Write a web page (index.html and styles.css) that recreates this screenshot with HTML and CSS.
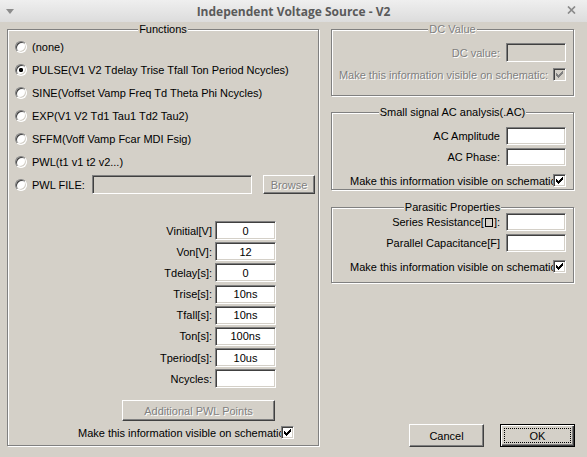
FILE: index.html
```html
<!DOCTYPE html>
<html>
<head>
<meta charset="utf-8">
<title>Independent Voltage Source - V2</title>
<link rel="stylesheet" href="styles.css">
</head>
<body>
<div class="titlebar">
  <svg class="menu-icon" width="8" height="5" viewBox="0 0 8 5"><path d="M0 0h8L4 5z" fill="#8c8c8c"/></svg>
  <div class="title">Independent Voltage Source - V2</div>
  <svg class="close-icon" width="9" height="8" viewBox="0 0 9 8"><path d="M1 0.5L8 7.5M8 0.5L1 7.5" stroke="#8a8a8a" stroke-width="1.7" fill="none"/></svg>
</div>
<div class="content">
  <div class="group functions">
    <div class="group-title">Functions</div>
    <div class="radios">
      <div class="radio-row"><span class="radio"></span><span>(none)</span></div>
      <div class="radio-row"><span class="radio checked"></span><span>PULSE(V1 V2 Tdelay Trise Tfall Ton Period Ncycles)</span></div>
      <div class="radio-row"><span class="radio"></span><span>SINE(Voffset Vamp Freq Td Theta Phi Ncycles)</span></div>
      <div class="radio-row"><span class="radio"></span><span>EXP(V1 V2 Td1 Tau1 Td2 Tau2)</span></div>
      <div class="radio-row"><span class="radio"></span><span>SFFM(Voff Vamp Fcar MDI Fsig)</span></div>
      <div class="radio-row"><span class="radio"></span><span>PWL(t1 v1 t2 v2...)</span></div>
      <div class="radio-row"><span class="radio"></span><span class="pwl-label">PWL FILE:</span><span class="field disabled pwl-file"></span><span class="btn disabled browse">Browse</span></div>
    </div>
    <div class="params">
      <span class="plabel">Vinitial[V]</span><span class="field">0</span>
      <span class="plabel">Von[V]:</span><span class="field">12</span>
      <span class="plabel">Tdelay[s]:</span><span class="field">0</span>
      <span class="plabel">Trise[s]:</span><span class="field">10ns</span>
      <span class="plabel">Tfall[s]:</span><span class="field">10ns</span>
      <span class="plabel">Ton[s]:</span><span class="field">100ns</span>
      <span class="plabel">Tperiod[s]:</span><span class="field">10us</span>
      <span class="plabel">Ncycles:</span><span class="field"></span>
    </div>
    <div class="btn disabled addpwl">Additional PWL Points</div>
    <div class="check-row left-check">
      <span>Make this information visible on schematic</span>
      <span class="check overlap"><svg width="7" height="7" viewBox="0 0 7 7" shape-rendering="crispEdges"><path d="M0 2h1v3h-1zM1 3h1v3h-1zM2 4h1v3h-1zM3 3h1v3h-1zM4 2h1v3h-1zM5 1h1v3h-1zM6 0h1v3h-1z" fill="#000"/></svg></span>
    </div>
  </div>

  <div class="right-col">
    <div class="group dc dim">
      <div class="group-title">DC Value</div>
      <div class="row dc-row1"><span>DC value:</span><span class="field disabled rfield"></span></div>
      <div class="check-row dc-row2">
        <span>Make this information visible on schematic:</span>
        <span class="check disabled gap"><svg width="7" height="7" viewBox="0 0 7 7" shape-rendering="crispEdges"><path d="M0 2h1v3h-1zM1 3h1v3h-1zM2 4h1v3h-1zM3 3h1v3h-1zM4 2h1v3h-1zM5 1h1v3h-1zM6 0h1v3h-1z" fill="#808080"/></svg></span>
      </div>
    </div>

    <div class="group ac">
      <div class="group-title">Small signal AC analysis(.AC)</div>
      <div class="row ac-row1"><span>AC Amplitude</span><span class="field rfield"></span></div>
      <div class="row ac-row2"><span>AC Phase:</span><span class="field rfield"></span></div>
      <div class="check-row ac-row3">
        <span>Make this information visible on schematic</span>
        <span class="check overlap"><svg width="7" height="7" viewBox="0 0 7 7" shape-rendering="crispEdges"><path d="M0 2h1v3h-1zM1 3h1v3h-1zM2 4h1v3h-1zM3 3h1v3h-1zM4 2h1v3h-1zM5 1h1v3h-1zM6 0h1v3h-1z" fill="#000"/></svg></span>
      </div>
    </div>

    <div class="group parasitic">
      <div class="group-title">Parasitic Properties</div>
      <div class="row par-row1"><span>Series Resistance[<span class="tofu"></span>]:</span><span class="field rfield"></span></div>
      <div class="row par-row2"><span>Parallel Capacitance[F]</span><span class="field rfield"></span></div>
      <div class="check-row par-row3">
        <span>Make this information visible on schematic</span>
        <span class="check overlap"><svg width="7" height="7" viewBox="0 0 7 7" shape-rendering="crispEdges"><path d="M0 2h1v3h-1zM1 3h1v3h-1zM2 4h1v3h-1zM3 3h1v3h-1zM4 2h1v3h-1zM5 1h1v3h-1zM6 0h1v3h-1z" fill="#000"/></svg></span>
      </div>
    </div>

    <div class="buttons">
      <div class="btn dlg">Cancel</div>
      <div class="btn dlg default"><span class="focus">OK</span></div>
    </div>
  </div>
</div>
</body>
</html>
```

FILE: styles.css
```css
* { box-sizing: border-box; }
html, body { margin: 0; padding: 0; }
body {
  width: 587px;
  height: 457px;
  overflow: hidden;
  background: #d4d0c8;
  font-family: "Liberation Sans", Arial, sans-serif;
  font-size: 11px;
  color: #000;
}

/* title bar */
.titlebar {
  height: 22px;
  display: grid;
  grid-template-columns: 1fr auto 1fr;
  align-items: center;
  background: linear-gradient(#efefef, #dcdcdc);
}
.title {
  font-family: "Open Sans", "DejaVu Sans", sans-serif;
  font-weight: 700;
  font-size: 12px;
  color: #5a5a5a;
}
.menu-icon { justify-self: start; margin-left: 6px; margin-top: 1px; }
.close-icon { justify-self: end; margin-right: 11px; margin-top: -2px; }

/* layout */
.content {
  display: flex;
  padding: 7px 0 0 7px;
}
.group {
  border: 1px solid #808080;
  box-shadow: 1px 1px 0 #fff, inset 1px 1px 0 #fff;
  display: flex;
  flex-direction: column;
}
.group-title {
  align-self: center;
  height: 13px;
  line-height: 13px;
  margin-top: -7px;
  padding: 0 1px;
  background: #d4d0c8;
  white-space: nowrap;
}
.dim, .dim .group-title, .dim .row, .dim .check-row {
  color: #808080;
  text-shadow: 1px 1px 0 #fff;
}

/* functions */
.functions { width: 312px; height: 417px; flex: none; }
.radios { margin-top: -1px; padding-left: 7px; }
.radio-row {
  height: 23px;
  display: flex;
  align-items: center;
  white-space: nowrap;
}
.radio {
  width: 12px;
  height: 12px;
  flex: none;
  margin-right: 5px;
  border-radius: 50%;
  background: #fff;
  border: 1px solid;
  border-color: #808080 #ffffff #ffffff #808080;
  box-shadow: inset 1px 1px 0 #404040, inset -1px -1px 0 #d4d0c8;
}
.radio.checked {
  background: radial-gradient(circle, #000 0, #000 1.9px, #fff 2.4px);
}
.pwl-label { width: 60px; flex: none; }
.field {
  height: 19px;
  background: #fff;
  border: 1px solid;
  border-color: #808080 #ffffff #ffffff #808080;
  box-shadow: inset 1px 1px 0 #404040, inset -1px -1px 0 #d4d0c8;
  display: flex;
  align-items: center;
  justify-content: center;
}
.field.disabled { background: #d4d0c8; }
.pwl-file { width: 160px; flex: none; }

.btn {
  display: flex;
  align-items: center;
  justify-content: center;
  background: #d4d0c8;
  border: 1px solid;
  border-color: #ffffff #404040 #404040 #ffffff;
  box-shadow: inset -1px -1px 0 #808080;
  white-space: nowrap;
}
.btn.disabled {
  color: #808080;
  text-shadow: 1px 1px 0 #fff;
}
.browse { width: 52px; height: 19px; margin-left: 11px; flex: none; }

.params {
  display: grid;
  grid-template-columns: 204px 61px;
  column-gap: 3px;
  row-gap: 2.2px;
  margin-top: 25px;
}
.plabel {
  text-align: right;
  align-self: center;
  white-space: nowrap;
}
.addpwl {
  width: 153px;
  height: 21px;
  margin-top: 12px;
  margin-left: 114px;
}

.check-row {
  display: flex;
  align-items: center;
  justify-content: flex-end;
  height: 13px;
  white-space: nowrap;
}
.left-check { margin-top: 5px; padding-right: 24px; }
.check {
  width: 13px;
  height: 13px;
  flex: none;
  display: flex;
  align-items: center;
  justify-content: center;
  background: #fff;
  border: 1px solid;
  border-color: #808080 #ffffff #ffffff #808080;
  box-shadow: inset 1px 1px 0 #404040, inset -1px -1px 0 #d4d0c8;
}
.check.disabled { background: #d4d0c8; }
.check.overlap { margin-left: -3px; }
.check.gap { margin-left: 5px; }

/* right column */
.right-col {
  width: 243px;
  margin-left: 12px;
  display: flex;
  flex-direction: column;
  flex: none;
}
.row {
  display: flex;
  align-items: center;
  justify-content: flex-end;
  padding-right: 7px;
  gap: 6px;
  white-space: nowrap;
}
.check-row.dc-row2, .ac-row3, .par-row3 { padding-right: 7px; }
.rfield { width: 60px; height: 18px; flex: none; }
.dc-row1 .rfield { height: 19px; }

.dc { height: 67px; }
.dc-row1 { margin-top: 7px; }
.dc-row2 { margin-top: 6px; }

.ac { height: 78px; margin-top: 16px; }
.ac-row1 { margin-top: 8px; }
.ac-row2 { margin-top: 3px; }
.ac-row3 { margin-top: 8px; }

.parasitic { height: 76px; margin-top: 17px; }
.par-row1 { margin-top: -1px; }
.par-row2 { margin-top: 3px; }
.par-row3 { margin-top: 8px; }

.tofu {
  display: inline-block;
  width: 8px;
  height: 9px;
  border: 1px solid #000;
  margin: 0 1px;
  vertical-align: -1px;
}

.buttons {
  display: flex;
  gap: 16px;
  margin-top: 141px;
  margin-left: 78px;
}
.dlg { width: 75px; height: 23px; flex: none; }
.dlg.default {
  border: 1px solid #000;
  box-shadow: inset 1px 1px 0 #fff, inset -1px -1px 0 #404040, inset -2px -2px 0 #808080;
  padding: 3px;
}
.focus {
  flex: 1;
  align-self: stretch;
  display: flex;
  align-items: center;
  justify-content: center;
  border: 1px dotted #000;
}
```
